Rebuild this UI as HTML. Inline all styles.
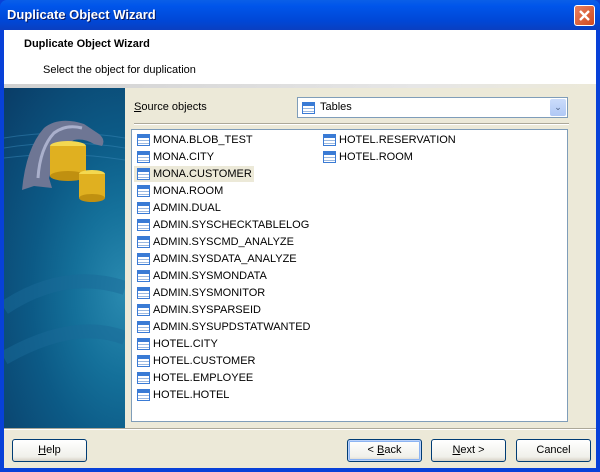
<!DOCTYPE html>
<html><head><style>
*{margin:0;padding:0;box-sizing:border-box}
body{width:600px;height:472px;overflow:hidden;font-family:Tahoma,"Liberation Sans","DejaVu Sans",sans-serif;font-size:11px;background:#0841d8;position:relative}
.title{position:absolute;left:0;top:0;width:600px;height:30px;background:linear-gradient(#0a5fe8,#0055ea 20%,#0047d6 70%,#0a3fc0);border-radius:7px 7px 0 0}
.title span{position:absolute;left:7px;top:7px;color:#fff;font-weight:bold;font-size:13px;text-shadow:1px 1px #0a1a60}
.close{position:absolute;left:574px;top:5px;width:21px;height:21px;background:linear-gradient(135deg,#e8805f,#d04a20);border:1px solid #fff;border-radius:3px}
.client{position:absolute;left:4px;top:30px;width:592px;height:438px;background:#ece9d8}
.hdr{position:absolute;left:0;top:0;width:592px;height:54px;background:#fff}
.hdr b{position:absolute;left:20px;top:8px;font-size:11px}
.hdr i{position:absolute;left:39px;top:34px;font-style:normal}
.sep{position:absolute;left:0;top:54px;width:592px;height:4px;background:linear-gradient(90deg,#d0d0d0,#e6e6e6 70%,#ece9d8)}
.img{position:absolute;left:0;top:58px;width:121px;height:340px;background:radial-gradient(ellipse at 100% 60%,#2a8ab0 0,#14709a 30%,#0c5a86 55%,#0a3c66 100%)}
.lbl{position:absolute;left:130px;top:71px}
.combo{position:absolute;left:293px;top:67px;width:271px;height:21px;background:#fff;border:1px solid #7f9db9}
.combo span{position:absolute;left:22px;top:3px}
.combo .ic{left:4px;top:4px}
.dd{position:absolute;right:1px;top:1px;width:16px;height:17px;background:linear-gradient(#cbdcfb,#b0c8f5);border-radius:2px;color:#4d6185;font-size:9px;text-align:center;line-height:17px}
.hl{position:absolute;left:130px;top:93px;width:435px;height:2px;border-top:1px solid #aca899;border-bottom:1px solid #fff}
.list{position:absolute;left:127px;top:99px;width:437px;height:293px;background:#fff;border:1px solid #7f9db9}
.it{position:absolute;height:16px;line-height:16px;padding-left:19px;font-size:11px;letter-spacing:0}
.ic{position:absolute;left:3px;top:2px;width:13px;height:12px;border:1px solid #3a7bd5;background:repeating-linear-gradient(#fff 0 2px,#9ab8e0 2px 3px);}
.ic:before{content:"";position:absolute;left:0;top:0;right:0;height:3px;background:#3a7bd5}
.sel{background:#ece9d8}
.bsep{position:absolute;left:0;top:398px;width:592px;height:2px;border-top:1px solid #aca899;border-bottom:1px solid #fff}
.btn{position:absolute;top:409px;height:23px;border:1px solid #003c74;border-radius:3px;background:linear-gradient(#fff,#f0f0ea 80%,#d6d0c5);text-align:center;line-height:21px}
.def{box-shadow:inset 0 0 0 1px #b9d1fa,inset 0 0 0 2px #8cb4f2}
</style></head><body>
<div class="title"><span>Duplicate Object Wizard</span><div class="close"><svg width="19" height="19"><path d="M5 5L14 14M14 5L5 14" stroke="#fff" stroke-width="2.4"/></svg></div></div>
<div class="client">
<div class="hdr"><b>Duplicate Object Wizard</b><i>Select the object for duplication</i></div>
<div class="sep"></div>
<div class="img"><svg width="121" height="340" style="position:absolute;left:0;top:0">
<path d="M0 50Q60 40 121 50M0 60Q60 50 121 60M0 70Q60 62 121 72" stroke="#3a88b8" fill="none" opacity=".5"/>
<path d="M18 102Q22 60 40 40Q55 28 80 36L95 46Q102 52 98 58L90 56Q80 50 70 52Q55 60 45 90L48 100L30 98Z" fill="#6e7694"/>
<path d="M34 90Q36 60 50 45Q62 36 78 40" stroke="#aab0cc" stroke-width="3" fill="none"/>
<ellipse cx="64" cy="58" rx="18" ry="5" fill="#f4d850"/><rect x="46" y="58" width="36" height="30" fill="#e0b020"/><ellipse cx="64" cy="88" rx="18" ry="5" fill="#c09010"/>
<ellipse cx="88" cy="86" rx="13" ry="4" fill="#f4d850"/><rect x="75" y="86" width="26" height="24" fill="#e0b020"/><ellipse cx="88" cy="110" rx="13" ry="4" fill="#c09010"/>
<path d="M0 220Q60 180 121 200M0 270Q70 230 121 250" stroke="#1a6a98" stroke-width="14" fill="none" opacity=".5"/>
</svg></div>
<div class="lbl"><u>S</u>ource objects</div>
<div class="combo"><div class="ic"></div><span>Tables</span><div class="dd">&#8964;</div></div>
<div class="hl"></div>
<div class="list">
<div class="it" style="left:2px;top:2px"><div class="ic"></div>MONA.BLOB_TEST</div>
<div class="it" style="left:2px;top:19px"><div class="ic"></div>MONA.CITY</div>
<div class="it sel" style="left:2px;top:36px;padding-right:2px"><div class="ic"></div>MONA.CUSTOMER</div>
<div class="it" style="left:2px;top:53px"><div class="ic"></div>MONA.ROOM</div>
<div class="it" style="left:2px;top:70px"><div class="ic"></div>ADMIN.DUAL</div>
<div class="it" style="left:2px;top:87px"><div class="ic"></div>ADMIN.SYSCHECKTABLELOG</div>
<div class="it" style="left:2px;top:104px"><div class="ic"></div>ADMIN.SYSCMD_ANALYZE</div>
<div class="it" style="left:2px;top:121px"><div class="ic"></div>ADMIN.SYSDATA_ANALYZE</div>
<div class="it" style="left:2px;top:138px"><div class="ic"></div>ADMIN.SYSMONDATA</div>
<div class="it" style="left:2px;top:155px"><div class="ic"></div>ADMIN.SYSMONITOR</div>
<div class="it" style="left:2px;top:172px"><div class="ic"></div>ADMIN.SYSPARSEID</div>
<div class="it" style="left:2px;top:189px"><div class="ic"></div>ADMIN.SYSUPDSTATWANTED</div>
<div class="it" style="left:2px;top:206px"><div class="ic"></div>HOTEL.CITY</div>
<div class="it" style="left:2px;top:223px"><div class="ic"></div>HOTEL.CUSTOMER</div>
<div class="it" style="left:2px;top:240px"><div class="ic"></div>HOTEL.EMPLOYEE</div>
<div class="it" style="left:2px;top:257px"><div class="ic"></div>HOTEL.HOTEL</div>
<div class="it" style="left:188px;top:2px"><div class="ic"></div>HOTEL.RESERVATION</div>
<div class="it" style="left:188px;top:19px"><div class="ic"></div>HOTEL.ROOM</div>
</div>
<div class="bsep"></div>
<div class="btn" style="left:8px;width:75px"><u>H</u>elp</div>
<div class="btn def" style="left:343px;width:75px">&lt; <u>B</u>ack</div>
<div class="btn" style="left:427px;width:75px"><u>N</u>ext &gt;</div>
<div class="btn" style="left:512px;width:75px">Cancel</div>
</div>
</body></html>
